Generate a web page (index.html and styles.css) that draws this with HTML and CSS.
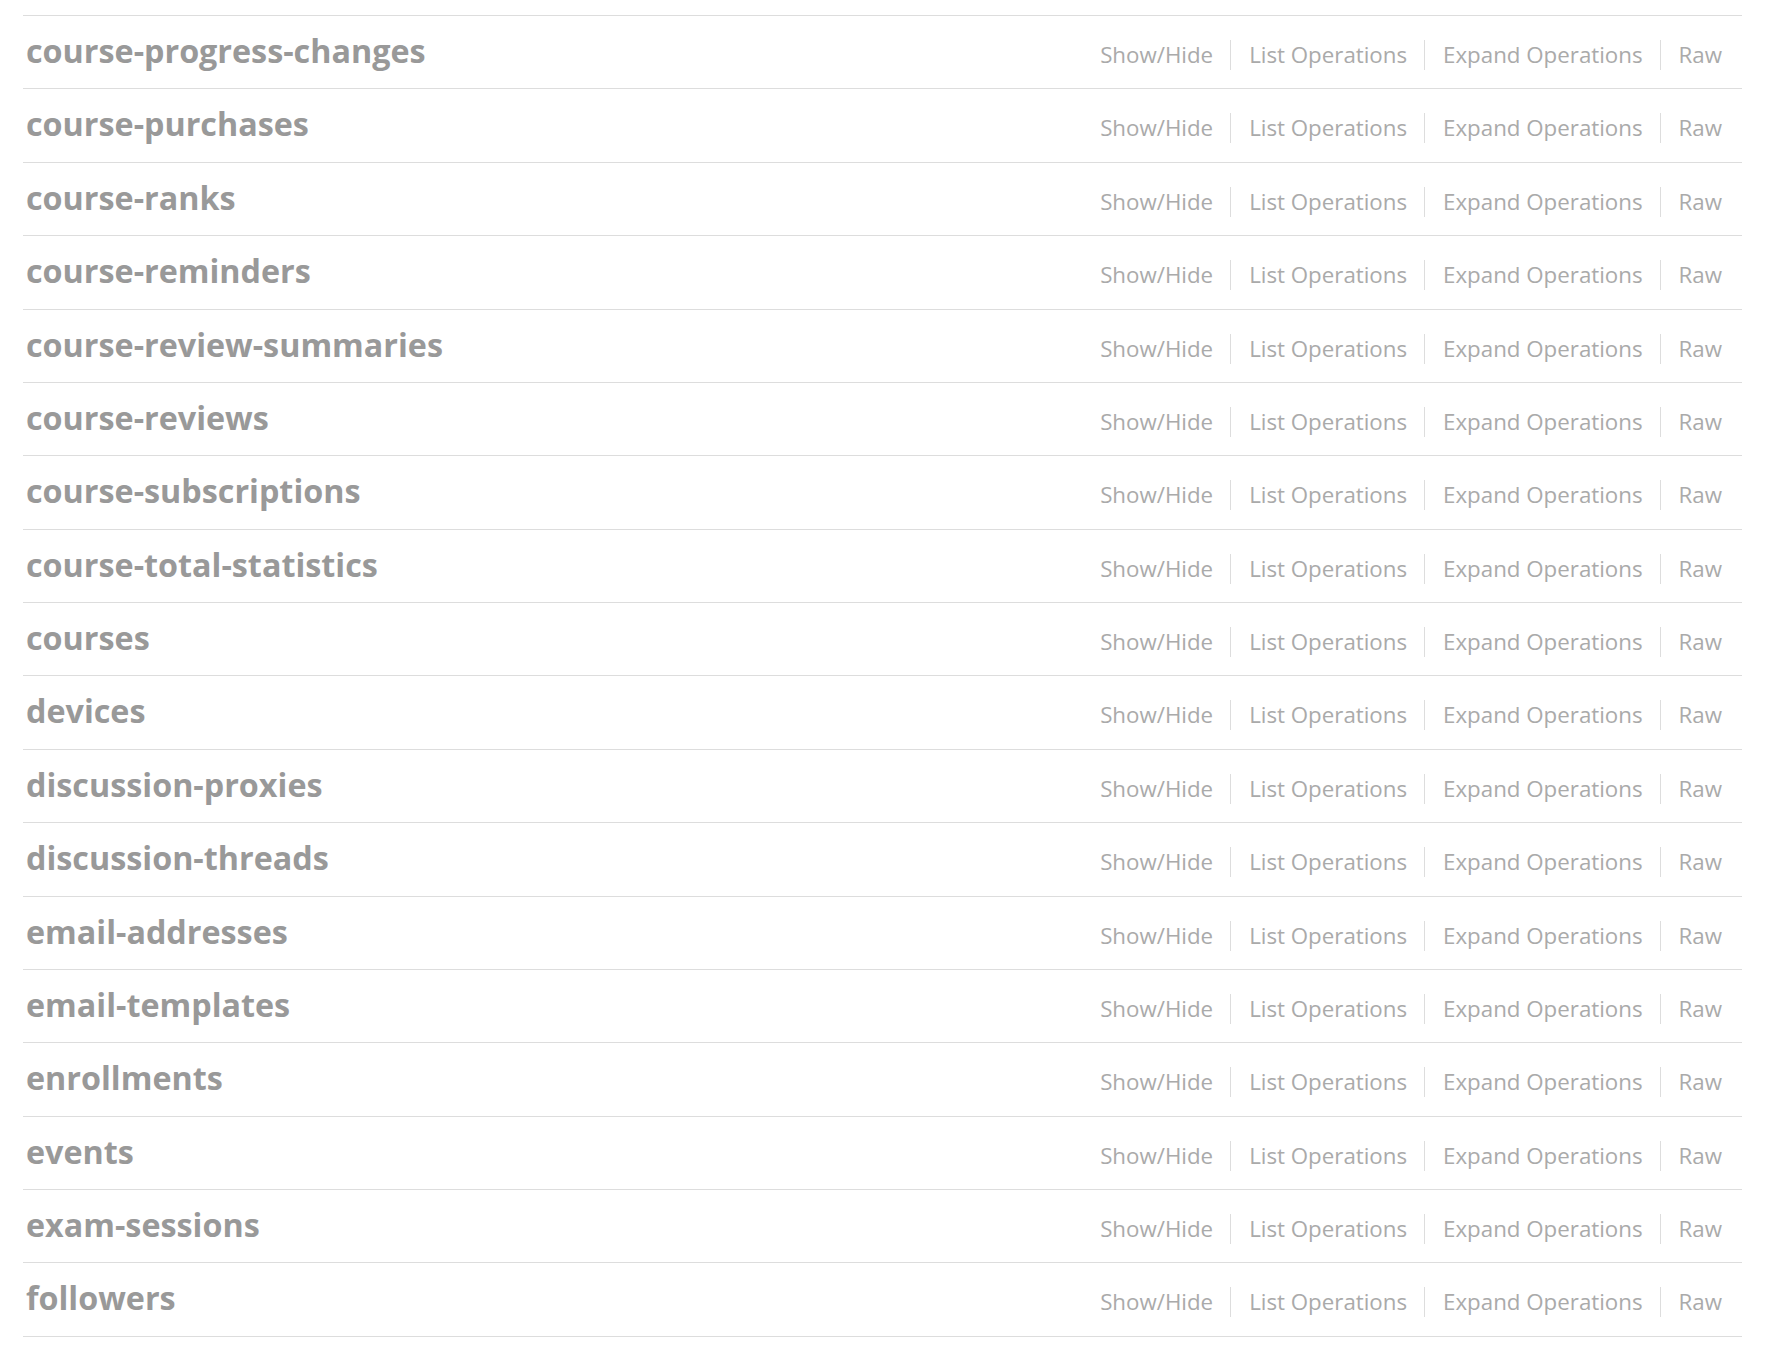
FILE: index.html
```html
<!DOCTYPE html>
<html>
<head>
<meta charset="utf-8">
<link rel="stylesheet" href="styles.css">
</head>
<body>
<ul class="resources">
  <li class="resource"><h2 class="name">course-progress-changes</h2><ul class="options"><li><a>Show/Hide</a></li><li><a>List Operations</a></li><li><a>Expand Operations</a></li><li><a>Raw</a></li></ul></li>
  <li class="resource"><h2 class="name">course-purchases</h2><ul class="options"><li><a>Show/Hide</a></li><li><a>List Operations</a></li><li><a>Expand Operations</a></li><li><a>Raw</a></li></ul></li>
  <li class="resource"><h2 class="name">course-ranks</h2><ul class="options"><li><a>Show/Hide</a></li><li><a>List Operations</a></li><li><a>Expand Operations</a></li><li><a>Raw</a></li></ul></li>
  <li class="resource"><h2 class="name">course-reminders</h2><ul class="options"><li><a>Show/Hide</a></li><li><a>List Operations</a></li><li><a>Expand Operations</a></li><li><a>Raw</a></li></ul></li>
  <li class="resource"><h2 class="name">course-review-summaries</h2><ul class="options"><li><a>Show/Hide</a></li><li><a>List Operations</a></li><li><a>Expand Operations</a></li><li><a>Raw</a></li></ul></li>
  <li class="resource"><h2 class="name">course-reviews</h2><ul class="options"><li><a>Show/Hide</a></li><li><a>List Operations</a></li><li><a>Expand Operations</a></li><li><a>Raw</a></li></ul></li>
  <li class="resource"><h2 class="name">course-subscriptions</h2><ul class="options"><li><a>Show/Hide</a></li><li><a>List Operations</a></li><li><a>Expand Operations</a></li><li><a>Raw</a></li></ul></li>
  <li class="resource"><h2 class="name">course-total-statistics</h2><ul class="options"><li><a>Show/Hide</a></li><li><a>List Operations</a></li><li><a>Expand Operations</a></li><li><a>Raw</a></li></ul></li>
  <li class="resource"><h2 class="name">courses</h2><ul class="options"><li><a>Show/Hide</a></li><li><a>List Operations</a></li><li><a>Expand Operations</a></li><li><a>Raw</a></li></ul></li>
  <li class="resource"><h2 class="name">devices</h2><ul class="options"><li><a>Show/Hide</a></li><li><a>List Operations</a></li><li><a>Expand Operations</a></li><li><a>Raw</a></li></ul></li>
  <li class="resource"><h2 class="name">discussion-proxies</h2><ul class="options"><li><a>Show/Hide</a></li><li><a>List Operations</a></li><li><a>Expand Operations</a></li><li><a>Raw</a></li></ul></li>
  <li class="resource"><h2 class="name">discussion-threads</h2><ul class="options"><li><a>Show/Hide</a></li><li><a>List Operations</a></li><li><a>Expand Operations</a></li><li><a>Raw</a></li></ul></li>
  <li class="resource"><h2 class="name">email-addresses</h2><ul class="options"><li><a>Show/Hide</a></li><li><a>List Operations</a></li><li><a>Expand Operations</a></li><li><a>Raw</a></li></ul></li>
  <li class="resource"><h2 class="name">email-templates</h2><ul class="options"><li><a>Show/Hide</a></li><li><a>List Operations</a></li><li><a>Expand Operations</a></li><li><a>Raw</a></li></ul></li>
  <li class="resource"><h2 class="name">enrollments</h2><ul class="options"><li><a>Show/Hide</a></li><li><a>List Operations</a></li><li><a>Expand Operations</a></li><li><a>Raw</a></li></ul></li>
  <li class="resource"><h2 class="name">events</h2><ul class="options"><li><a>Show/Hide</a></li><li><a>List Operations</a></li><li><a>Expand Operations</a></li><li><a>Raw</a></li></ul></li>
  <li class="resource"><h2 class="name">exam-sessions</h2><ul class="options"><li><a>Show/Hide</a></li><li><a>List Operations</a></li><li><a>Expand Operations</a></li><li><a>Raw</a></li></ul></li>
  <li class="resource"><h2 class="name">followers</h2><ul class="options"><li><a>Show/Hide</a></li><li><a>List Operations</a></li><li><a>Expand Operations</a></li><li><a>Raw</a></li></ul></li>
</ul>
</body>
</html>
```
FILE: styles.css
```css
html, body {
  margin: 0;
  padding: 0;
  background: #fff;
}
body {
  font-family: "Open Sans", "Liberation Sans", sans-serif;
}
.resources {
  list-style: none;
  margin: 0;
  padding: 15px 0 0 23px;
  width: 1719px;
}
.resource {
  display: flex;
  justify-content: space-between;
  align-items: flex-start;
  height: 72.39px;
  border-top: 1px solid #dddddd;
}
.resource:last-child {
  border-bottom: 1px solid #dddddd;
}
.name {
  margin: 0;
  padding: 14px 0 0 3px;
  font-size: 32.3px;
  line-height: 40px;
  font-weight: bold;
  color: #999999;
}
.options {
  list-style: none;
  margin: 0;
  padding: 24px 20px 0 0;
  display: flex;
}
.options li {
  padding: 0 17px 0 18px;
  border-right: 1px solid #dddddd;
  font-size: 22.3px;
  line-height: 30px;
  color: #aaaaaa;
}
.options li:first-child {
  padding-left: 0;
}
.options li:last-child {
  padding-right: 0;
  border-right: none;
}
```
